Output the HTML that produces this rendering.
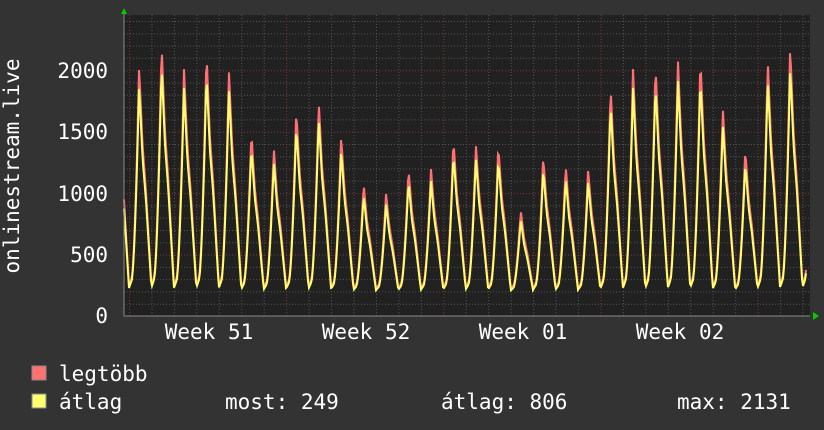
<!DOCTYPE html>
<html><head><meta charset="utf-8"><style>
body{margin:0;background:#333333;width:824px;height:430px;overflow:hidden;font-family:"DejaVu Sans Mono","Liberation Mono",monospace;color:#fff}
svg{position:absolute;left:0;top:0}
</style></head><body>
<svg id="g" width="824" height="430" xmlns="http://www.w3.org/2000/svg" font-family="DejaVu Sans Mono, Liberation Mono, monospace" font-size="21" fill="#fff">
<rect x="124" y="15" width="686" height="301" fill="#212121"/>
<g id="grid"></g>
<g id="lines"></g>
<polygon points="121,14 127,14 124,8" fill="#00cc00"/>
<polygon points="813,312 813,320 819,316" fill="#00cc00"/>
<g text-anchor="end">
<text x="108" y="323">0</text>
<text x="108" y="262">500</text>
<text x="108" y="201">1000</text>
<text x="108" y="139">1500</text>
<text x="108" y="78">2000</text>
</g>
<text transform="translate(19,166) rotate(-90)" text-anchor="middle">onlinestream.live</text>
<g text-anchor="middle">
<text x="209" y="339">Week 51</text>
<text x="366" y="339">Week 52</text>
<text x="523" y="339">Week 01</text>
<text x="680" y="339">Week 02</text>
</g>
<rect x="32" y="366" width="14" height="14" fill="#ff7070" stroke="#888" stroke-width="1"/>
<rect x="32" y="394" width="14" height="14" fill="#ffff70" stroke="#888" stroke-width="1"/>
<text x="59" y="381">legtöbb</text>
<text x="59" y="409">átlag</text>
<text x="225" y="409">most: 249</text>
<text x="441" y="409">átlag: 806</text>
<text x="677" y="409">max: 2131</text>
</svg>
<script>
var ns="http://www.w3.org/2000/svg";
function el(p,t,a){var e=document.createElementNS(ns,t);for(var k in a)e.setAttribute(k,a[k]);p.appendChild(e);return e;}
var grid=document.getElementById('grid');
function Y(v){return 316-v*0.1229;}
for(var v=100;v<=2400;v+=100){var maj=v%500==0;el(grid,'line',{x1:124,x2:810,y1:Y(v)+.5,y2:Y(v)+.5,stroke:maj?'#7a3a3a':'#555',"stroke-dasharray":'1,2'});}
for(var i=0;i<31;i++){var x=129.5+i*22.45;var maj=i%7==0;el(grid,'line',{x1:x,x2:x,y1:15,y2:316,stroke:maj?'#7a3a3a':'#555',"stroke-dasharray":'1,2'});}
var peaks=[2040,2220,2010,2150,2000,1500,1370,1680,1750,1470,1080,1000,1200,1200,1440,1400,1390,860,1300,1230,1200,1870,2010,2050,2090,2100,1700,1360,2090,2200];
var red=[],yel=[];
for(var x=124;x<=806;x+=1){
 var d=(x-129)/22.45; var di=Math.floor(d); var t=d-di;
 if(di<0){di=0;}
 if(di>29)di=29;
 var p=peaks[di];
 var f;
 if(t<0.12)f=0.02+t*0.3;
 else if(t<0.45)f=0.056+Math.pow((t-0.12)/0.33,1.6)*0.944;
 else if(t<0.6)f=1-(t-0.45)/0.15*0.35;
 else if(t<0.75)f=0.65-(t-0.6)/0.15*0.2;
 else f=0.45-(t-0.75)/0.25*0.43;
 var base=210;
 var vr=base+(p-base)*f; var vy=base-15+(p*0.93-base)*f;
 red.push(x+','+Y(vr).toFixed(1)); yel.push(x+','+Y(vy).toFixed(1));
}
var L=document.getElementById('lines');
el(L,'polyline',{points:red.join(' '),fill:'none',stroke:'#ff7070','stroke-width':2});
el(L,'polyline',{points:yel.join(' '),fill:'none',stroke:'#ffff70','stroke-width':2});
el(L,'line',{x1:124,x2:810,y1:316,y2:316,stroke:'#888'});
el(L,'line',{x1:124,x2:124,y1:12,y2:316,stroke:'#888'});
</script>
</body></html>
